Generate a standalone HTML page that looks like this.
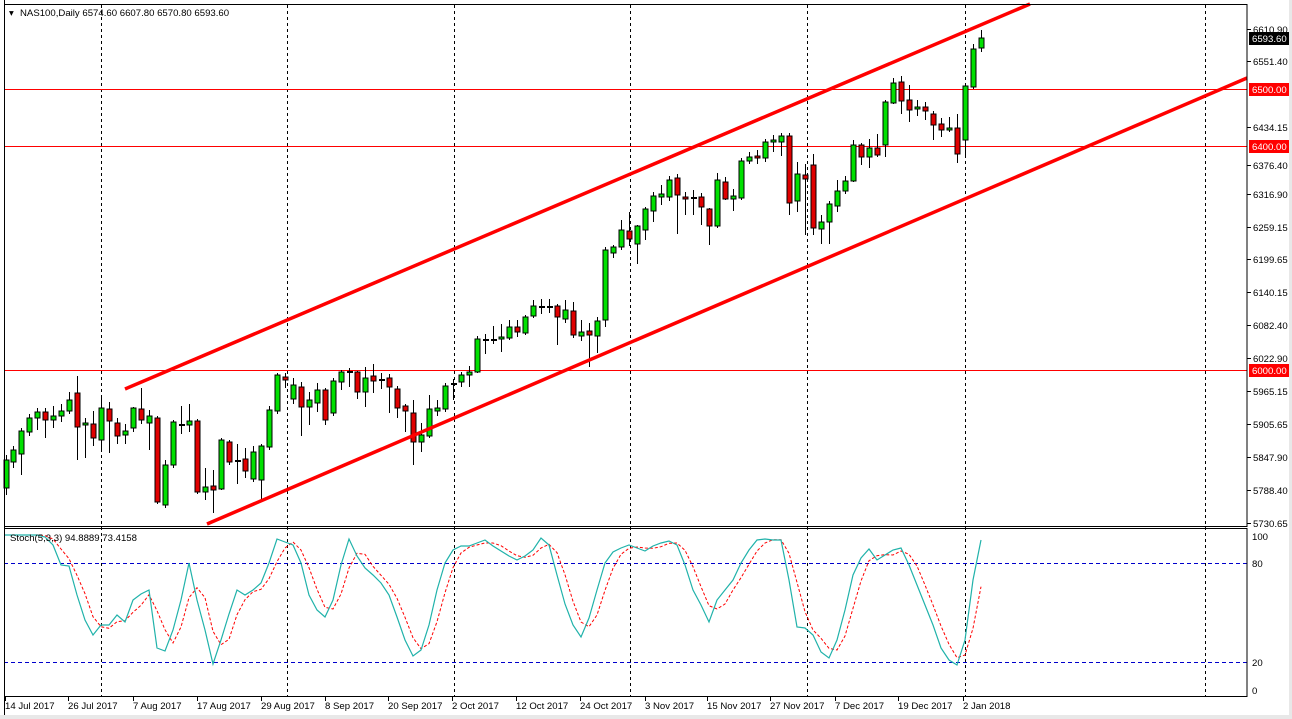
<!DOCTYPE html>
<html><head><meta charset="utf-8"><style>
html,body{margin:0;padding:0;background:#fff;}
body{width:1292px;height:719px;overflow:hidden;position:relative;font-family:"Liberation Sans",sans-serif;}
svg{position:absolute;left:0;top:0;}
svg text{font-family:"Liberation Sans",sans-serif;font-size:9.6px;}
</style></head><body>
<svg id="s" width="1292" height="719" xmlns="http://www.w3.org/2000/svg">
<rect x="0" y="0" width="1292" height="719" fill="#fff"/>
<rect x="1289" y="0" width="3" height="719" fill="#e8e8e8"/>
<rect x="0" y="715" width="1292" height="4" fill="#e8e8e8"/>
<g id="grid" stroke="#000" stroke-dasharray="3,3" stroke-width="1"></g>
<line x1="4" y1="89.5" x2="1247" y2="89.5" stroke="#f00"/>
<line x1="4" y1="146.5" x2="1247" y2="146.5" stroke="#f00"/>
<line x1="4" y1="370.5" x2="1247" y2="370.5" stroke="#f00"/>
<line x1="4" y1="563.5" x2="1247" y2="563.5" stroke="#00c" stroke-dasharray="4,3"/>
<line x1="4" y1="662.5" x2="1247" y2="662.5" stroke="#00c" stroke-dasharray="4,3"/>
<g id="c"></g>
<line x1="125" y1="389" x2="1030" y2="4" stroke="#f00" stroke-width="3.5"/>
<line x1="207" y1="524" x2="1247" y2="78" stroke="#f00" stroke-width="3.5"/>
<polyline id="sig" fill="none" stroke="#f00" stroke-width="1" stroke-dasharray="3,2"/>
<polyline id="main" fill="none" stroke="#20b2aa" stroke-width="1.2"/>
<rect x="1248" y="4" width="41" height="711" fill="#fff"/>
<rect x="4.5" y="4.5" width="1242.5" height="522" fill="none" stroke="#000"/>
<rect x="4.5" y="528.5" width="1242.5" height="168" fill="none" stroke="#000"/>
<line x1="4.5" y1="0" x2="4.5" y2="715" stroke="#000"/>
<text x="9" y="16" fill="#000">▾</text>
<text x="20" y="16" fill="#000">NAS100,Daily  6574.60 6607.80 6570.80 6593.60</text>
<text x="10" y="541" fill="#000">Stoch(5,3,3) 94.8889 73.4158</text>
<g id="ax" fill="#000"></g>
</svg>
<script>
var NS="http://www.w3.org/2000/svg";
function el(p,t,a,txt){var e=document.createElementNS(NS,t);for(var k in a)e.setAttribute(k,a[k]);if(txt!=null)e.textContent=txt;document.getElementById(p).appendChild(e);return e;}
[101,287,454,630,807,965,1205].forEach(function(x){el("grid","line",{x1:x+.5,y1:5,x2:x+.5,y2:696});});
var C=[[6,460,488,'g',455,495],[13,450,462,'g',446,468],[21,431,454,'g',428,475],[29,418,432,'g',414,436],[37,412,418,'g',408,430],[45,412,420,'r',408,438],[53,416,420,'g',406,428],[61,411,416,'g',404,422],[69,400,411,'g',392,414],[77,393,427,'r',376,460],[85,423,425,'g',418,458],[93,424,438,'r',411,446],[101,408,440,'g',398,452],[109,409,421,'r',402,453],[117,423,436,'r',418,444],[125,431,435,'g',424,444],[133,408,428,'g',407,432],[141,409,420,'r',388,424],[149,416,423,'g',410,450],[157,418,502,'r',416,504],[165,465,505,'g',460,508],[173,422,465,'g',420,468],[181,424,425,'d',406,434],[189,421,425,'g',404,432],[197,421,492,'r',419,494],[205,487,492,'g',468,500],[213,486,490,'r',470,513],[221,440,489,'g',438,490],[229,442,462,'r',440,465],[237,460,461,'d',444,484],[245,459,471,'r',448,478],[253,452,479,'g',446,482],[261,446,480,'g',444,499],[269,410,447,'g',406,450],[277,375,411,'g',373,414],[285,377,380,'r',373,388],[293,385,399,'g',378,404],[301,387,407,'r',382,436],[309,400,407,'g',392,425],[317,390,403,'g',383,412],[325,390,420,'r',388,425],[333,381,413,'g',378,416],[341,372,382,'g',370,390],[349,371,372,'d',368,387],[357,372,392,'r',371,399],[365,378,392,'g',367,407],[373,376,381,'r',364,393],[381,379,380,'d',373,389],[389,378,387,'r',374,413],[397,389,408,'r',386,418],[405,406,411,'r',404,432],[413,413,442,'r',400,465],[421,435,442,'g',423,452],[429,409,436,'g',395,438],[437,408,411,'g',400,416],[445,386,409,'g',383,412],[453,383,384,'d',379,400],[461,375,382,'g',372,387],[469,372,375,'g',366,387],[477,339,372,'g',336,373],[485,339,340,'d',334,354],[493,339,340,'d',326,344],[501,337,339,'g',324,352],[509,327,338,'g',320,340],[517,327,332,'r',320,337],[525,317,333,'g',315,335],[533,306,316,'g',300,318],[541,306,307,'d',299,314],[549,306,307,'d',299,313],[557,306,317,'r',304,345],[565,310,319,'g',300,323],[573,311,335,'r',302,338],[581,332,336,'g',320,341],[589,331,335,'r',323,367],[597,321,336,'g',317,353],[605,250,320,'g',247,327],[613,247,253,'g',245,258],[621,230,247,'g',220,250],[629,231,239,'r',212,246],[637,226,244,'g',225,264],[645,209,230,'g',207,240],[653,196,211,'g',192,222],[661,194,197,'g',185,205],[669,180,197,'g',176,201],[677,178,195,'r',174,234],[685,197,199,'r',192,215],[693,197,198,'d',190,215],[701,197,207,'r',193,225],[709,209,226,'r',208,245],[717,180,226,'g',173,228],[725,182,199,'r',177,200],[733,196,199,'g',189,211],[741,161,198,'g',158,200],[749,157,161,'g',152,164],[757,156,158,'r',150,164],[765,142,158,'g',139,162],[773,140,142,'g',135,152],[781,136,142,'g',133,156],[789,136,203,'r',133,215],[797,174,201,'g',162,212],[805,175,179,'r',164,235],[813,165,228,'r',154,235],[821,222,229,'g',215,244],[829,204,222,'g',201,244],[837,191,206,'g',180,212],[845,181,191,'g',176,194],[853,145,181,'g',140,182],[861,145,157,'r',143,165],[869,148,157,'g',139,168],[877,148,155,'r',134,157],[885,102,145,'g',100,157],[893,83,103,'g',78,104],[901,82,101,'r',76,114],[909,100,110,'r',85,122],[917,107,109,'g',100,116],[925,107,111,'r',102,120],[933,114,125,'r',111,140],[941,124,130,'r',118,137],[949,128,130,'g',117,132],[957,128,154,'r',114,163],[965,86,140,'g',85,155],[973,49,87,'g',44,89],[981,38,48,'g',30,52]];
C.forEach(function(d){var x=d[0];
el("c","line",{x1:x+.5,y1:d[4],x2:x+.5,y2:d[5],stroke:"#000","stroke-width":1});
var f=d[3]=='g'?'#00e000':(d[3]=='r'?'#e00000':'#000');
var h=Math.max(d[2]-d[1],1);
if(d[3]=='d'){el("c","rect",{x:x-2,y:d[1],width:6,height:2,fill:"#000"});}
else el("c","rect",{x:x-2,y:d[1],width:5,height:h,fill:f,stroke:"#000","stroke-width":1});});
var S=[[5,535],[13,535],[21,535],[29,535],[37,535],[45,537],[53,545],[61,565],[69,566],[77,595],[85,620],[93,635],[101,625],[109,625],[117,615],[125,622],[133,600],[141,594],[149,590],[157,648],[165,651],[173,630],[181,600],[189,563],[197,600],[205,630],[213,664],[221,640],[229,614],[237,590],[245,595],[253,590],[261,583],[269,563],[277,539],[285,542],[293,545],[301,563],[309,595],[317,610],[325,617],[333,600],[341,565],[349,539],[357,556],[365,568],[373,575],[381,583],[389,595],[397,617],[405,640],[413,656],[421,650],[429,625],[437,590],[445,563],[453,550],[461,546],[469,546],[477,543],[485,540],[493,546],[501,551],[509,556],[517,560],[525,556],[533,550],[541,538],[549,545],[557,575],[565,604],[573,625],[581,637],[589,618],[597,590],[605,563],[613,552],[621,548],[629,545],[637,548],[645,551],[653,546],[661,543],[669,541],[677,545],[685,565],[693,590],[701,605],[709,622],[717,600],[725,590],[733,580],[741,563],[749,550],[757,540],[765,539],[773,540],[781,540],[789,580],[797,627],[805,628],[813,635],[821,652],[829,658],[837,640],[845,610],[853,575],[861,558],[869,549],[877,560],[885,555],[893,550],[901,548],[909,565],[917,585],[925,605],[933,625],[941,648],[949,660],[957,665],[965,640],[973,580],[981,540]];
document.getElementById("main").setAttribute("points",S.map(function(p){return p[0]+","+p[1]}).join(" "));
var sg=[];for(var i=0;i<S.length;i++){var a=S[Math.max(0,i-2)][1],b=S[Math.max(0,i-1)][1],c=S[i][1];sg.push(S[i][0]+","+((a+b+c)/3).toFixed(1));}
document.getElementById("sig").setAttribute("points",sg.join(" "));
var P=[["6610.90",29],["6551.40",61],["6434.15",127],["6376.40",165],["6316.90",194],["6259.15",227],["6199.65",259],["6140.15",292],["6082.40",325],["6022.90",358],["5965.15",391],["5905.65",424],["5847.90",457],["5788.40",490],["5730.65",523]];
P.forEach(function(p){el("ax","line",{x1:1247,y1:p[1]+.5,x2:1251,y2:p[1]+.5,stroke:"#000"});el("ax","text",{x:1253,y:p[1]+4},p[0]);});
[["6593.60",38,"#000"],["6500.00",89,"#f00"],["6400.00",146,"#f00"],["6000.00",370,"#f00"]].forEach(function(p){el("ax","rect",{x:1249,y:p[1]-6,width:40,height:13,fill:p[2]});el("ax","text",{x:1252,y:p[1]+4,fill:"#fff"},p[0]);});
[["100",536],["80",563],["20",662],["0",690]].forEach(function(p){el("ax","text",{x:1252,y:p[1]+4},p[0]);});
var D=[["14 Jul 2017",5],["26 Jul 2017",68],["7 Aug 2017",133],["17 Aug 2017",197],["29 Aug 2017",261],["8 Sep 2017",325],["20 Sep 2017",388],["2 Oct 2017",452],["12 Oct 2017",516],["24 Oct 2017",580],["3 Nov 2017",645],["15 Nov 2017",707],["27 Nov 2017",770],["7 Dec 2017",835],["19 Dec 2017",898],["2 Jan 2018",963]];
D.forEach(function(d){el("ax","line",{x1:d[1]+.5,y1:697,x2:d[1]+.5,y2:701,stroke:"#000"});el("ax","text",{x:d[1],y:709},d[0]);});
</script>
</body></html>
